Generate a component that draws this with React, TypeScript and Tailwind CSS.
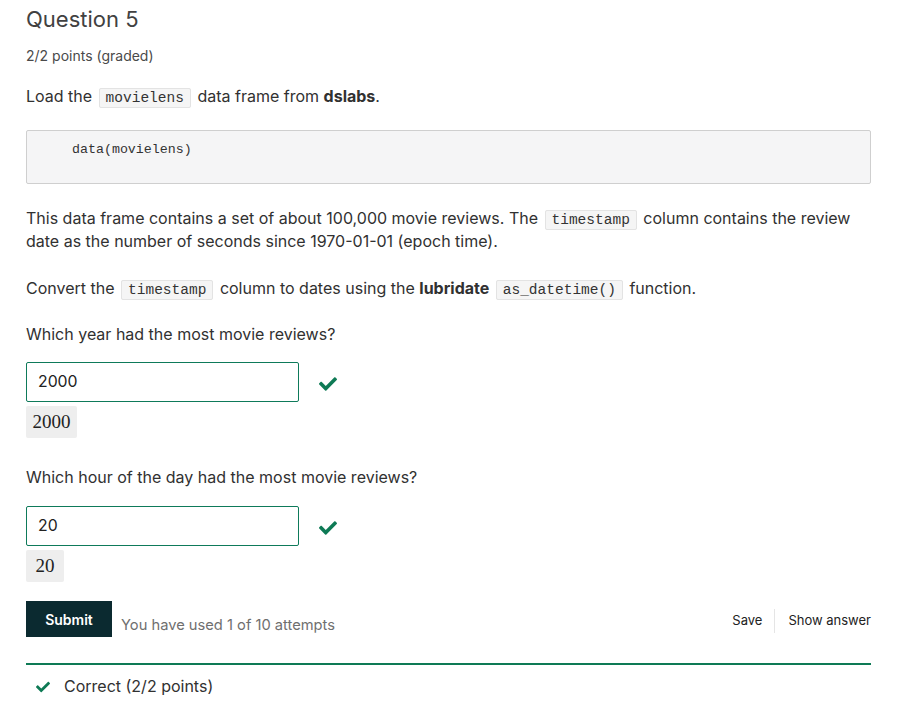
import { FaCheck } from 'react-icons/fa';

const mono = 'font-["Liberation_Mono",monospace]';

function Code({ children }: { children: React.ReactNode }) {
  return (
    <code className={`${mono} text-[14.5px] leading-none text-[#333] bg-[#f5f5f5] border border-[#e3e3e3] rounded-[2px] px-[6px] py-[1px] mx-[2px]`}>
      {children}
    </code>
  );
}

function Answer({ value, shown, boxW }: { value: string; shown: string; boxW: string }) {
  return (
    <div>
      <div className="flex items-center">
        <div className="w-[273px] h-[40px] border border-[#0e7a5a] rounded-[2px] flex items-center px-[11px] text-[15.8px] text-[#222]">
          {value}
        </div>
        <FaCheck className="ml-[20px] mt-[4px] text-[#0e7a55] w-[18px] h-[18px]" />
      </div>
      <div className={`${boxW} mt-[4px] h-[32px] bg-[#eeeeee] rounded-[2px] flex items-center justify-center text-[19px] text-[#222] font-["Liberation_Serif",serif]`}>
        {shown}
      </div>
    </div>
  );
}

export default function App() {
  return (
    <div className="bg-white w-[912px] h-[717px] px-[26px] pt-[5px] font-['Inter',sans-serif] text-[#313131] overflow-hidden">
      <h2 className="text-[22px] text-[#414141] leading-[28px] font-normal">Question 5</h2>
      <div className="mt-[13px] text-[14px] leading-[20px] text-[#4a4a4a]">2/2 points (graded)</div>

      <p className="mt-[18px] text-[16px] leading-[24px]">
        Load the <Code>movielens</Code> data frame from <b className="font-bold">dslabs</b>.
      </p>

      <div className="mt-[22px] w-[845px] h-[54px] bg-[#f5f5f6] border border-[#cfcfcf] rounded-[2px] pl-[45px] pt-[8px] leading-[16px]">
        <span className={`${mono} text-[13.3px] text-[#333]`}>data(movielens)</span>
      </div>

      <p className="mt-[23px] text-[16px] leading-[23px] w-[845px]">
        This data frame contains a set of about 100,000 movie reviews. The <Code>timestamp</Code> column contains the review
        date as the number of seconds since 1970-01-01 (epoch time).
      </p>

      <p className="mt-[24px] text-[16px] leading-[23px]">
        Convert the <Code>timestamp</Code> column to dates using the <b className="font-bold">lubridate</b> <Code>as_datetime()</Code> function.
      </p>

      <p className="mt-[23px] text-[16px] leading-[23px]">Which year had the most movie reviews?</p>
      <div className="mt-[16px]">
        <Answer value="2000" shown="2000" boxW="w-[51px]" />
      </div>

      <p className="mt-[28px] text-[16px] leading-[23px]">Which hour of the day had the most movie reviews?</p>
      <div className="mt-[17px]">
        <Answer value="20" shown="20" boxW="w-[38px]" />
      </div>

      <div className="mt-[19px] flex items-center w-[845px]">
        <button className="w-[86px] h-[36px] bg-[#0b2a30] text-white text-[14px] font-semibold">Submit</button>
        <span className="ml-[9px] mt-[12px] text-[14.7px] text-[#6f6f6f]">You have used 1 of 10 attempts</span>
        <div className="ml-auto mt-[4px] flex items-center text-[13px] text-[#222]">
          <span className="pr-[12px]">Save</span>
          <span className="w-px h-[24px] bg-[#e5e5e5]" />
          <span className="pl-[13px]">Show answer</span>
        </div>
      </div>

      <div className="mt-[26px] w-[845px] border-t-2 border-[#0e7a55] flex items-center pt-[10px] pl-[10px]">
        <FaCheck className="text-[#0e7a55] w-[14px] h-[14px]" />
        <span className="ml-[14px] text-[16px] leading-[23px] text-[#313131]">Correct (2/2 points)</span>
      </div>
    </div>
  );
}
